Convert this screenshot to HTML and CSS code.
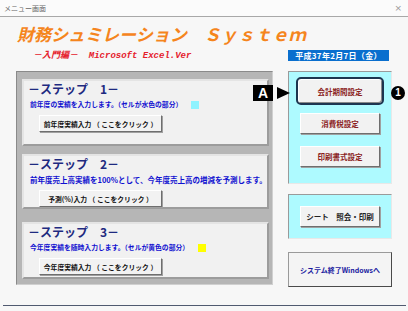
FILE: index.html
```html
<!DOCTYPE html>
<html lang="ja">
<head>
    <meta charset="UTF-8">
    <title>メニュー画面</title>
    <link rel="stylesheet" href="styles.css">
</head>
<body>
    <div class="titlebar">
        <span class="titlebar-text">メニュー画面</span>
        <span class="titlebar-close">×</span>
    </div>

    <div class="content">
        <h1 class="app-title">財務シュミレーション　Ｓｙｓｔｅｍ</h1>

        <div class="sub-row">
            <div class="subtitle">－入門編－ &nbsp;Microsoft Excel.Ver</div>
            <div class="date-box">平成37年2月7日（金）</div>
        </div>

        <div class="main">
            <div class="steps">
                <div class="step step-1">
                    <div class="step-title">－ステップ　1－</div>
                    <div class="step-desc">前年度の実績を入力します。（セルが水色の部分） <span class="swatch swatch-cyan"></span></div>
                    <button class="btn btn-step">前年度実績入力 （ ここをクリック ）</button>
                </div>
                <div class="step step-2">
                    <div class="step-title">－ステップ　2－</div>
                    <div class="step-desc step-desc-wide">前年度売上高実績を100%として、今年度売上高の増減を予測します。</div>
                    <button class="btn btn-step">予測(%)入力 （ ここをクリック ）</button>
                </div>
                <div class="step step-3">
                    <div class="step-title">－ステップ　3－</div>
                    <div class="step-desc">今年度実績を随時入力します。（セルが黄色の部分） <span class="swatch swatch-yellow"></span></div>
                    <button class="btn btn-step">今年度実績入力 （ ここをクリック ）</button>
                </div>
            </div>

            <div class="side">
                <div class="panel panel-settings">
                    <button class="btn btn-side btn-focus">会計期間設定</button>
                    <button class="btn btn-side">消費税設定</button>
                    <button class="btn btn-side">印刷書式設定</button>

                    <!-- callout marks over the first button -->
                    <span class="mark-a">A</span>
                    <svg class="mark-arrow" width="13" height="12" viewBox="0 0 13 12"><polygon points="0,0 13,6 0,12" fill="#000"/></svg>
                    <span class="mark-one">1</span>
                </div>
                <div class="panel panel-sheet">
                    <button class="btn btn-side">シート　照会・印刷</button>
                </div>
                <div class="exit-box">システム終了Windowsへ</div>
            </div>
        </div>
    </div>

    <div class="bottom-line"></div>
</body>
</html>
```

FILE: styles.css
```css
body {
    margin: 0;
    width: 408px;
    height: 311px;
    background-color: #f7f7f7;
    font-family: "Noto Sans CJK JP", "DejaVu Sans", sans-serif;
    overflow: hidden;
}
.titlebar {
    height: 17px;
    background-color: #fbfbfb;
    border-bottom: 1px solid #a8a8a8;
    display: flex;
    align-items: center;
    justify-content: space-between;
    padding: 0 6px 0 4px;
    box-sizing: border-box;
}
.titlebar-text {
    font-size: 7px;
    color: #666;
}
.titlebar-close {
    font-family: "DejaVu Sans", sans-serif;
    font-size: 9px;
    color: #999;
}
.content {
    padding: 6px 16px 0 16px;
}
.app-title {
    margin: 0 0 0 1px;
    font-size: 17px;
    line-height: 22px;
    font-style: italic;
    font-weight: bold;
    color: #f5851d;
    white-space: nowrap;
}
.sub-row {
    display: flex;
    justify-content: space-between;
    align-items: flex-start;
    height: 26px;
}
.subtitle {
    margin: 3px 0 0 17px;
    font-family: "Liberation Mono", "Noto Sans CJK JP", monospace;
    font-size: 9px;
    font-style: italic;
    font-weight: bold;
    color: #e5202c;
    white-space: nowrap;
}
.date-box {
    margin: 5px 3px 0 0;
    width: 101px;
    height: 11px;
    line-height: 11px;
    background-color: #0a6fce;
    color: #fff;
    font-size: 8px;
    font-weight: bold;
    text-align: center;
    letter-spacing: 0.3px;
}
.main {
    display: flex;
    justify-content: space-between;
}
.steps {
    width: 257px;
    height: 214px;
    box-sizing: border-box;
    background-color: #b6b6b6;
    border: 1px solid;
    border-color: #8a8a8a #d0d0d0 #d0d0d0 #8a8a8a;
    padding: 7px 3px 0 5px;
    display: flex;
    flex-direction: column;
    gap: 8px;
}
.step {
    background-color: #f1f1f1;
    border: 2px solid;
    border-color: #e4e4e4 #9c9c9c #9c9c9c #e4e4e4;
    box-sizing: border-box;
    padding: 1px 0 0 4px;
}
.step-1 { height: 67px; }
.step-2 { height: 55px; }
.step-3 { height: 57px; margin-top: 5px; }
.step-title {
    font-size: 12px;
    line-height: 14px;
    font-weight: bold;
    color: #1e2a80;
    white-space: nowrap;
}
.step-desc {
    margin-top: 4px;
    font-size: 6.8px;
    line-height: 9px;
    font-weight: bold;
    color: #1010d0;
    white-space: nowrap;
    padding-left: 2px;
    display: flex;
    align-items: center;
}
.step-desc-wide {
    font-size: 7.5px;
}
.swatch {
    display: inline-block;
    width: 8px;
    height: 8px;
    margin-left: 9px;
}
.swatch-cyan { background-color: #8ff3ff; }
.swatch-yellow { background-color: #ffff00; }
.btn {
    display: block;
    font-family: "Noto Sans CJK JP", "DejaVu Sans", sans-serif;
    font-weight: bold;
    background-color: #f2f2f2;
    border: 1px solid;
    border-color: #ffffff #6e6e6e #6e6e6e #ffffff;
    box-shadow: 1px 1px 0 #a0a0a0;
    padding: 0;
    cursor: pointer;
    white-space: nowrap;
}
.btn-step {
    margin: 6px 0 0 11px;
    width: 123px;
    height: 17px;
    font-size: 6.8px;
    color: #111;
}
.side {
    width: 104px;
    display: flex;
    flex-direction: column;
}
.panel {
    background-color: #aefaff;
    border: 1px solid;
    border-color: #9a9a9a #e8e8e8 #e8e8e8 #9a9a9a;
    box-sizing: border-box;
    display: flex;
    flex-direction: column;
    align-items: center;
}
.panel-settings {
    position: relative;
    height: 113px;
    padding-top: 5px;
    gap: 12px;
}
.panel-sheet {
    height: 45px;
    margin-top: 10px;
    justify-content: center;
}
.btn-side {
    width: 80px;
    height: 21px;
    font-size: 7.5px;
    color: #8a1c1c;
}
.panel-sheet .btn-side {
    color: #222;
    font-size: 7.5px;
}
.btn-focus {
    width: 88px;
    height: 28px;
    border: 2px solid #1d3550;
    border-radius: 5px;
    box-shadow: inset 1px 1px 0 #fff, inset -1px -1px 0 #888;
    margin-bottom: -4px;
}
.exit-box {
    margin-top: 13px;
    height: 35px;
    box-sizing: border-box;
    border: 1px solid;
    border-color: #9a9a9a #4a4a4a #4a4a4a #9a9a9a;
    background-color: #f4f4f4;
    display: flex;
    align-items: center;
    justify-content: center;
    font-size: 7px;
    font-weight: bold;
    color: #1a1aa0;
    white-space: nowrap;
}
.mark-a {
    position: absolute;
    left: -36px;
    top: 13px;
    width: 20px;
    height: 16px;
    background-color: #000;
    color: #fff;
    font-family: "Liberation Sans", sans-serif;
    font-weight: bold;
    font-size: 14px;
    line-height: 16px;
    text-align: center;
}
.mark-arrow {
    position: absolute;
    left: -12px;
    top: 15px;
}
.mark-one {
    position: absolute;
    right: -14px;
    top: 14px;
    width: 14px;
    height: 14px;
    border-radius: 50%;
    background-color: #000;
    color: #fff;
    font-family: "Liberation Sans", sans-serif;
    font-weight: bold;
    font-size: 10px;
    line-height: 14px;
    text-align: center;
}
.bottom-line {
    position: absolute;
    left: 3px;
    top: 305px;
    width: 403px;
    height: 1px;
    background-color: #505a70;
}
```
